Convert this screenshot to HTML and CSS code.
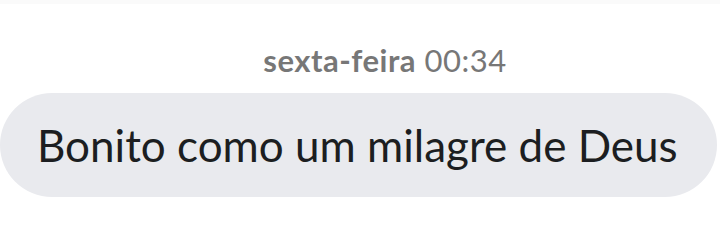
FILE: index.html
```html
<!DOCTYPE html>
<html lang="pt">
<head>
    <meta charset="UTF-8">
    <title>Conversa</title>
    <link rel="stylesheet" href="styles.css">
</head>
<body>
    <div class="top-bar"></div>

    <main class="thread">
        <p class="timestamp"><span class="day">sexta-feira</span> 00:34</p>

        <div class="message-row">
            <div class="bubble">Bonito como um milagre de Deus</div>
        </div>
    </main>
</body>
</html>
```

FILE: styles.css
```css
body {
    margin: 0;
    background-color: #ffffff;
    font-family: 'Lato', 'Liberation Sans', sans-serif;
    width: 720px;
    height: 240px;
    overflow: hidden;
}

.top-bar {
    height: 4px;
    background-color: #fafafa;
}

.thread {
    display: flex;
    flex-direction: column;
}

.timestamp {
    margin: 0;
    padding: 39px 0 0 50px;
    text-align: center;
    color: #777777;
    font-size: 31px;
    line-height: 34px;
    letter-spacing: 0.5px;
}

.day {
    font-weight: bold;
}

.message-row {
    display: flex;
    padding-top: 16px;
}

.bubble {
    width: 717px;
    height: 104px;
    box-sizing: border-box;
    display: flex;
    align-items: center;
    padding-left: 37px;
    background-color: #e9eaee;
    border-radius: 52px;
    color: #1c1e21;
    font-size: 44px;
}
```
